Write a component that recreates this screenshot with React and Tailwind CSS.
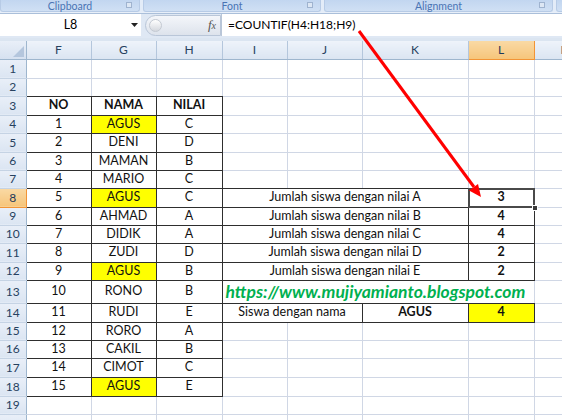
import React from "react";

const COLS = ["F", "G", "H", "I", "J", "K", "L", "M"];
const COL_W = ["w-[26px]", "w-[65px]", "w-[65px]", "w-[66px]", "w-[65px]", "w-[75px]", "w-[106px]", "w-[66px]", "w-[64px]"];

const ROW_H = {
  1: "h-[19px]", 2: "h-[18px]", 3: "h-[19px]", 4: "h-[18px]", 5: "h-[19px]",
  6: "h-[18px]", 7: "h-[18px]", 8: "h-[19px]", 9: "h-[18px]", 10: "h-[18px]",
  11: "h-[19px]", 12: "h-[18px]", 13: "h-[23px]", 14: "h-[19px]", 15: "h-[18px]",
  16: "h-[18px]", 17: "h-[19px]", 18: "h-[19px]", 19: "h-[18px]", 20: "h-[18px]",
};

const students = [
  [1, "AGUS", "C"], [2, "DENI", "D"], [3, "MAMAN", "B"], [4, "MARIO", "C"],
  [5, "AGUS", "C"], [6, "AHMAD", "A"], [7, "DIDIK", "A"], [8, "ZUDI", "D"],
  [9, "AGUS", "B"], [10, "RONO", "B"], [11, "RUDI", "E"], [12, "RORO", "A"],
  [13, "CAKIL", "B"], [14, "CIMOT", "C"], [15, "AGUS", "E"],
];
const summary = [["A", 3], ["B", 4], ["C", 4], ["D", 2], ["E", 2]];

// cells that carry the dark table borders
const dark = (r, c) =>
  (r >= 3 && r <= 18 && c <= 2) ||
  (r >= 8 && r <= 12 && c >= 3 && c <= 6) ||
  (r === 14 && c >= 3 && c <= 6);

function cellsFor(r) {
  const cells = [];
  const plain = (c, props = {}) => ({ c, span: 1, ...props });

  if (r === 3) {
    cells.push(plain(0, { text: "NO", bold: true }));
    cells.push(plain(1, { text: "NAMA", bold: true }));
    cells.push(plain(2, { text: "NILAI", bold: true }));
  } else if (r >= 4 && r <= 18) {
    const [no, nama, nilai] = students[r - 4];
    cells.push(plain(0, { text: no }));
    cells.push(plain(1, { text: nama, yellow: nama === "AGUS" }));
    cells.push(plain(2, { text: nilai }));
  } else {
    cells.push(plain(0), plain(1), plain(2));
  }

  if (r >= 8 && r <= 12) {
    const [g, n] = summary[r - 8];
    cells.push({ c: 3, span: 3, text: `Jumlah siswa dengan nilai ${g}` });
    cells.push(plain(6, { text: n, bold: true, selected: r === 8 }));
    cells.push(plain(7));
  } else if (r === 13) {
    cells.push({ c: 3, span: 4, url: true });
    cells.push(plain(7));
  } else if (r === 14) {
    cells.push({ c: 3, span: 2, text: "Siswa dengan nama" });
    cells.push(plain(5, { text: "AGUS", bold: true }));
    cells.push(plain(6, { text: 4, bold: true, yellow: true }));
    cells.push(plain(7));
  } else {
    for (let c = 3; c <= 7; c++) cells.push(plain(c));
  }
  return cells;
}

function Cell({ r, cell }) {
  const last = cell.c + cell.span - 1;
  const rightDark = dark(r, last) || dark(r, last + 1);
  let bottomDark = false;
  for (let c = cell.c; c <= last; c++) if (dark(r, c) || dark(r + 1, c)) bottomDark = true;

  return (
    <td
      colSpan={cell.span}
      className={`p-0 border-r border-b ${rightDark ? "border-r-[#2e2e2e]" : "border-r-[#d0d7e5]"} ${
        bottomDark ? "border-b-[#2e2e2e]" : "border-b-[#d0d7e5]"
      } ${cell.yellow ? "bg-[#ffff00]" : "bg-white"} ${cell.url ? "text-left pl-[3px]" : "text-center"} ${
        cell.selected ? "relative" : ""
      }`}
    >
      {cell.url ? (
        <span className="whitespace-nowrap text-[17.5px] font-bold italic leading-none text-[#00b050]">
          https://www.mujiyamianto.blogspot.com
        </span>
      ) : (
        <span className={`whitespace-nowrap leading-none ${cell.bold ? "font-bold" : ""}`}>{cell.text}</span>
      )}
      {cell.selected && (
        <>
          <div className="absolute -left-[1px] -top-[1px] -right-[1px] -bottom-[1px] z-10 border-2 border-[#4a4a4a]" />
          <div className="absolute -right-[4px] -bottom-[4px] z-20 h-[6px] w-[6px] border border-white bg-[#3a3a3a]" />
        </>
      )}
    </td>
  );
}

function RowHeader({ r }) {
  const active = r === 8;
  return (
    <td
      className={`p-0 text-center border-r border-b text-[12px] ${
        active
          ? "bg-gradient-to-b from-[#f9d9a4] to-[#f6c57a] border-r-[#f29436] border-b-[#f29436] text-[#1e395b]"
          : "bg-gradient-to-b from-[#e9eff8] to-[#dbe5f2] border-r-[#9eb6ce] border-b-[#c5d3e4] text-[#27415f]"
      }`}
    >
      {r < 20 ? r : ""}
    </td>
  );
}

function Ribbon() {
  const groups = [
    { label: "Clipboard", w: "w-[140px]" },
    { label: "Font", w: "w-[178px]" },
    { label: "Alignment", w: "w-[229px]" },
    { label: "", w: "w-[40px]" },
  ];
  return (
    <div className="flex h-[12px] gap-[3px] overflow-hidden bg-[#e3ecf8]">
      {groups.map((g, i) => (
        <div
          key={i}
          className={`relative flex shrink-0 items-start justify-center rounded-b-[3px] border-x border-b border-[#b7cbe6] bg-gradient-to-b from-[#c2d6f0] to-[#d0e0f4] ${g.w}`}
        >
          <span className="pt-[1px] text-[10.5px] leading-[10px] text-[#4a74b4]">{g.label}</span>
          {g.label && (
            <span className="absolute right-[7px] top-[2px] h-[6px] w-[6px] border border-[#9fb3cf] bg-[#dde7f4]" />
          )}
        </div>
      ))}
    </div>
  );
}

function FormulaBar() {
  return (
    <div className="flex h-[26px] flex-col bg-[#dfe8f4]">
      <div className="h-[2px] border-b border-[#aabfda] bg-[#e8eff9]" />
      <div className="flex h-[22px] items-center">
        <div className="relative flex h-full w-[141px] items-center justify-center bg-white">
          <span className="text-[12.5px] text-black">L8</span>
          <svg className="absolute right-[3px] top-[9px]" width="7" height="4" viewBox="0 0 7 4">
            <path d="M0 0h7L3.5 4z" fill="#222" />
          </svg>
        </div>
        <div className="ml-[4px] flex h-[21px] w-[76px] items-center rounded-l-full border border-[#b9c6d8] bg-gradient-to-b from-[#f4f6fa] to-[#dde3ec]">
          <span className="ml-[3px] h-[13px] w-[13px] rounded-full border border-[#c3c9d2] bg-gradient-to-b from-[#ffffff] to-[#d4d8de]" />
          <span className="ml-auto mr-[4px] font-['Liberation_Serif',serif] text-[13px] italic text-[#555]">
            f<span className="text-[10px]">x</span>
          </span>
        </div>
        <div className="flex h-full flex-1 items-center border-l border-[#b9c6d8] bg-white pl-[6px]">
          <span className="text-[12px] text-black">=COUNTIF(H4:H18;H9)</span>
        </div>
      </div>
      <div className="h-[2px]" />
    </div>
  );
}

function ColumnHeaders() {
  return (
    <tr className="h-[18px]">
      <td className="relative p-0 border-r border-b border-r-[#9eb6ce] border-b-[#9eb6ce] bg-gradient-to-b from-[#e9eff8] to-[#d6e1f0]">
        <svg className="absolute bottom-[2px] right-[2px]" width="11" height="11" viewBox="0 0 11 11">
          <path d="M11 0V11H0z" fill="#b4c6dd" />
        </svg>
      </td>
      {COLS.map((c) => (
        <td
          key={c}
          className={`p-0 text-center border-r border-b text-[12px] ${
            c === "L"
              ? "bg-gradient-to-b from-[#f9d9a4] to-[#f6c57a] border-r-[#f29436] border-b-[#f29436] text-[#1e395b]"
              : "bg-gradient-to-b from-[#eef3fa] to-[#dbe5f2] border-r-[#b4c6dc] border-b-[#9eb6ce] text-[#27415f]"
          }`}
        >
          {c}
        </td>
      ))}
    </tr>
  );
}

export default function App() {
  const rows = Array.from({ length: 20 }, (_, i) => i + 1);
  return (
    <div className="relative h-[420px] w-[562px] overflow-hidden bg-white font-['Lato',sans-serif] text-[12.5px] text-[#111]">
      <Ribbon />
      <FormulaBar />
      <div className="h-[3px] bg-[#dbe5f1]" />
      <table className="w-[598px] table-fixed border-collapse leading-none">
        <colgroup>
          {COL_W.map((w, i) => (
            <col key={i} className={w} />
          ))}
        </colgroup>
        <tbody>
          <ColumnHeaders />
          {rows.map((r) => (
            <tr key={r} className={ROW_H[r]}>
              <RowHeader r={r} />
              {cellsFor(r).map((cell) => (
                <Cell key={cell.c} r={r} cell={cell} />
              ))}
            </tr>
          ))}
        </tbody>
      </table>

      {/* red arrow from the formula to L8 */}
      <svg className="pointer-events-none absolute left-0 top-0 z-30" width="562" height="420">
        <line x1="359" y1="31" x2="474" y2="187" stroke="#ff0000" strokeWidth="3" />
        <path d="M481 197 L469 190.5 L478 184 Z" fill="#ff0000" />
      </svg>
    </div>
  );
}
